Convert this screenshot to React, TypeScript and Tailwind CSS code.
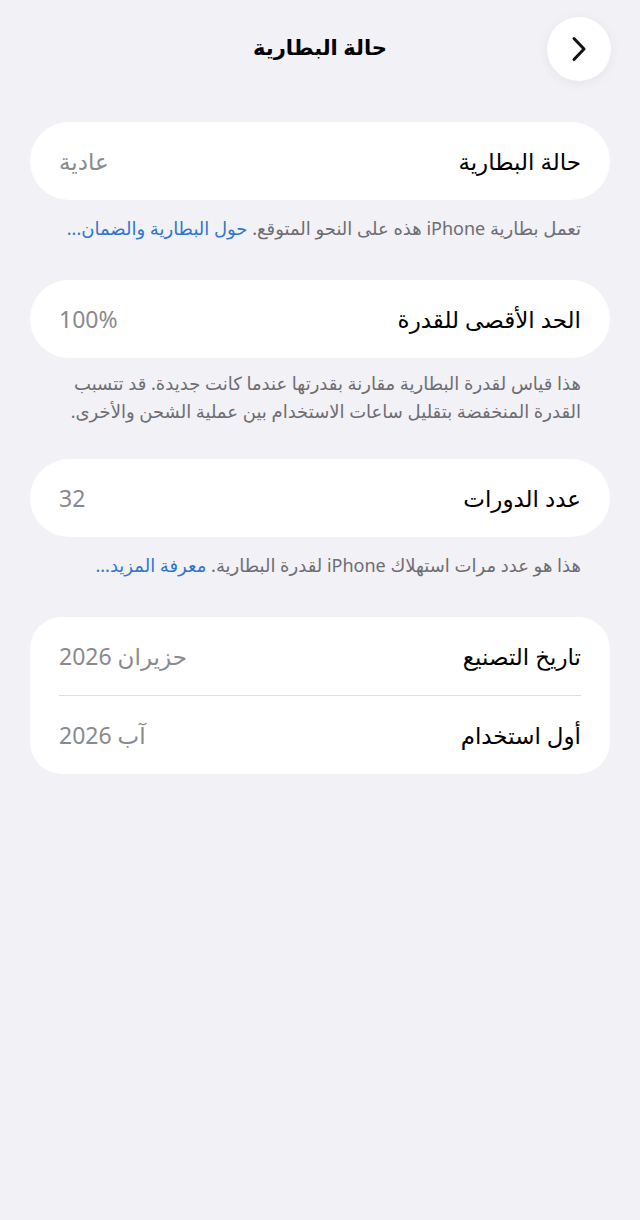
import React from 'react';

const font = { fontFamily: '"Noto Sans", "DejaVu Sans", sans-serif' };

function Row({ label, value }: { label: string; value: string }) {
    return (
        <div className="flex items-center justify-between h-[78px]">
            <span className="text-[23px] text-black">{label}</span>
            <span className="text-[23px] text-[#8a8a8e]">{value}</span>
        </div>
    );
}

function Note({ children, top = 'pt-[14px]' }: { children: React.ReactNode; top?: string }) {
    return <p className={`px-[59px] ${top} text-[18px] leading-[28px] text-[#6d6d72]`}>{children}</p>;
}

export default function App() {
    return (
        <div dir="rtl" style={font} className="min-h-screen w-[640px] bg-[#f2f1f6]">
            <header className="relative h-[122px] flex justify-center">
                <h1 className="mt-[33px] text-[21px] leading-[28px] font-bold text-black">حالة البطارية</h1>
                <button className="absolute top-[17px] right-[29px] w-[64px] h-[64px] rounded-full bg-white shadow-[0_2px_12px_rgba(0,0,0,0.06)] flex items-center justify-center">
                    <svg width="16" height="26" viewBox="0 0 16 26" fill="none">
                        <path d="M3 2.5 L13 13 L3 23.5" stroke="#111" strokeWidth="3" strokeLinecap="round" strokeLinejoin="round" />
                    </svg>
                </button>
            </header>

            <div className="px-[30px]">
                <div className="bg-white rounded-[39px] px-[29px]">
                    <Row label="حالة البطارية" value="عادية" />
                </div>
            </div>
            <Note>
                تعمل بطارية iPhone هذه على النحو المتوقع. <span className="text-[#2f76d2]">حول البطارية والضمان...</span>
            </Note>

            <div className="px-[30px] mt-[38px]">
                <div className="bg-white rounded-[39px] px-[29px]">
                    <Row label="الحد الأقصى للقدرة" value="100%" />
                </div>
            </div>
            <Note top="pt-[11px]">
                هذا قياس لقدرة البطارية مقارنة بقدرتها عندما كانت جديدة. قد تتسبب القدرة المنخفضة بتقليل ساعات الاستخدام بين عملية الشحن والأخرى.
            </Note>

            <div className="px-[30px] mt-[34px]">
                <div className="bg-white rounded-[39px] px-[29px]">
                    <Row label="عدد الدورات" value="32" />
                </div>
            </div>
            <Note>
                هذا هو عدد مرات استهلاك iPhone لقدرة البطارية. <span className="text-[#2f76d2]">معرفة المزيد...</span>
            </Note>

            <div className="px-[30px] mt-[38px]">
                <div className="bg-white rounded-[32px] px-[29px]">
                    <Row label="تاريخ التصنيع" value="حزيران 2026" />
                    <div className="h-px bg-[#dededf]" />
                    <Row label="أول استخدام" value="آب 2026" />
                </div>
            </div>
        </div>
    );
}
